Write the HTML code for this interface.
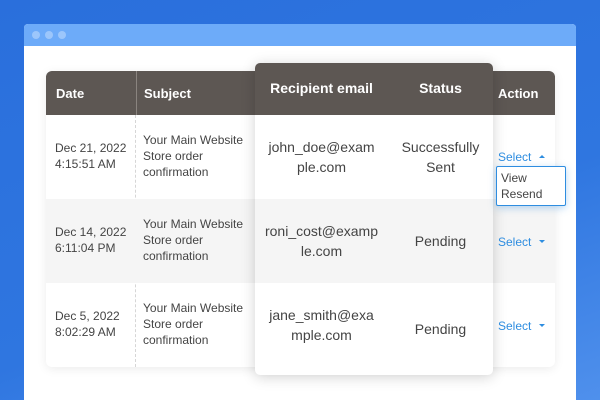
<!DOCTYPE html>
<html style="width:600px;height:400px;overflow:hidden"><head><meta charset="utf-8"><style>
*{margin:0;padding:0;box-sizing:border-box}
body{width:600px;height:400px;overflow:hidden;position:relative;font-family:"Liberation Sans",sans-serif;background:linear-gradient(160deg,#2a6fdc 0%,#2f76e0 60%,#4f90ec 100%)}
.win{position:absolute;left:24px;top:24px;width:552px;height:376px;background:#fff;border-radius:4px 4px 0 0;overflow:hidden}
.bar{height:22px;background:#6dabf9;position:relative}
.dot{position:absolute;top:7px;width:8px;height:8px;border-radius:50%;background:#9cc6fb}
.tbl{position:absolute;left:46px;top:71px;width:509px;height:296px;background:#fff;border-radius:6px;box-shadow:0 2px 10px rgba(0,0,0,.08);overflow:hidden}
.hd{position:absolute;left:0;top:0;width:100%;height:44px;background:#5d5753}
.r2{position:absolute;left:0;top:128px;width:100%;height:84px;background:#f5f5f5}
.t{position:absolute;color:#444;font-size:12px;line-height:16px}
.h{position:absolute;color:#fff;font-size:13px;font-weight:bold}
.card{position:absolute;left:255px;top:63px;width:238px;height:312px;background:#fff;border-radius:5px;box-shadow:0 2px 14px rgba(0,0,0,.18);overflow:hidden}
.ch{position:absolute;left:0;top:0;width:100%;height:52px;background:#5d5753}
.c{position:absolute;color:#444;font-size:14px;line-height:20px;text-align:center}
.sel{position:absolute;color:#2e8de0;font-size:12px}
.tri{position:absolute;width:0;height:0;border-left:3px solid transparent;border-right:3px solid transparent}
</style></head><body>
<div class="win"><div class="bar"><div class="dot" style="left:8px"></div><div class="dot" style="left:21px"></div><div class="dot" style="left:34px"></div></div></div>
<div class="tbl">
<div class="hd"></div>
<div style="position:absolute;left:90px;top:0;height:44px;border-left:1px solid #8a847f"></div>
<div style="position:absolute;left:89px;top:44px;height:252px;border-left:1px dashed #d6d6d6"></div>
<div class="r2"></div>
<div class="h" style="left:10px;top:15px">Date</div>
<div class="h" style="left:98px;top:15px">Subject</div>
<div class="h" style="left:452px;top:15px">Action</div>
<div class="t" style="left:9px;top:69px">Dec 21, 2022<br>4:15:51 AM</div>
<div class="t" style="left:97px;top:61px">Your Main Website<br>Store order<br>confirmation</div>
<div class="t" style="left:9px;top:153px">Dec 14, 2022<br>6:11:04 PM</div>
<div class="t" style="left:97px;top:145px">Your Main Website<br>Store order<br>confirmation</div>
<div class="t" style="left:9px;top:237px">Dec 5, 2022<br>8:02:29 AM</div>
<div class="t" style="left:97px;top:229px">Your Main Website<br>Store order<br>confirmation</div>
</div>
<div class="card">
<div class="ch"></div>
<div style="position:absolute;left:0;top:136px;width:100%;height:84px;background:#f5f5f5"></div>
<div class="h" style="left:0;width:133px;text-align:center;top:17px;font-size:14px">Recipient email</div>
<div class="h" style="left:133px;width:105px;text-align:center;top:17px;font-size:14px">Status</div>
<div class="c" style="left:0;width:133px;top:74px">john_doe@exam<br>ple.com</div>
<div class="c" style="left:133px;width:105px;top:74px">Successfully<br>Sent</div>
<div class="c" style="left:0;width:133px;top:158px">roni_cost@examp<br>le.com</div>
<div class="c" style="left:133px;width:105px;top:168px">Pending</div>
<div class="c" style="left:0;width:133px;top:242px">jane_smith@exa<br>mple.com</div>
<div class="c" style="left:133px;width:105px;top:256px">Pending</div>
</div>
<div class="sel" style="left:498px;top:150px">Select</div>
<div class="tri" style="left:539px;top:155px;border-bottom:3px solid #2e8de0"></div>
<div style="position:absolute;left:496px;top:166px;width:70px;height:40px;background:#fff;border:1px solid #2e8de0;border-radius:2px;box-shadow:0 2px 8px rgba(46,141,224,.35);font-size:12px;color:#444;line-height:16px;padding:3px 0 0 4px">View<br>Resend</div>
<div class="sel" style="left:498px;top:235px">Select</div>
<div class="tri" style="left:539px;top:240px;border-top:3px solid #2e8de0"></div>
<div class="sel" style="left:498px;top:319px">Select</div>
<div class="tri" style="left:539px;top:324px;border-top:3px solid #2e8de0"></div>
</body></html>
